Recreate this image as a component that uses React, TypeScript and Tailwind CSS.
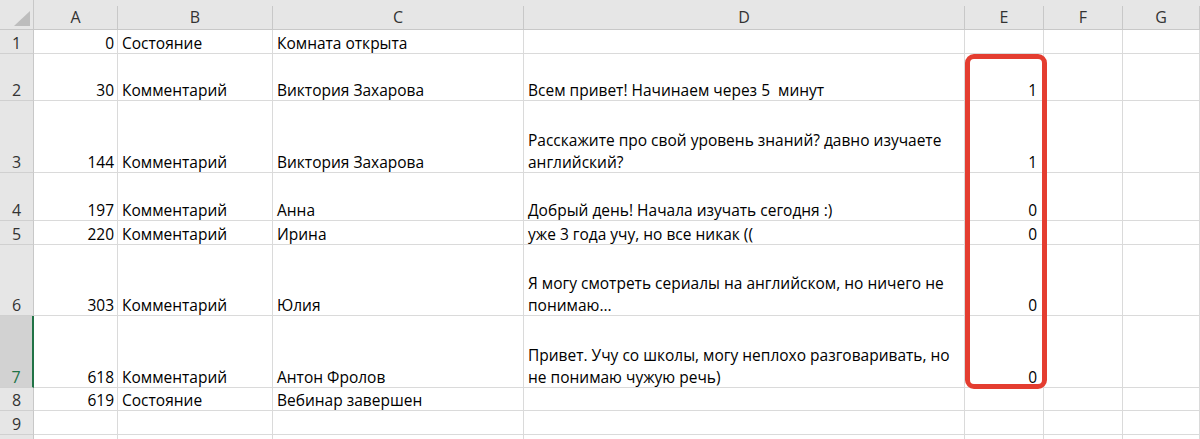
import React from 'react'

const cols = ['A', 'B', 'C', 'D', 'E', 'F', 'G']

type Row = { h: string; label?: string; n?: string; b?: string; c?: string; d?: string[]; e?: string; sel?: boolean }

const rows: Row[] = [
  { h: 'h-[24px]', label: '1', n: '0', b: 'Состояние', c: 'Комната открыта' },
  { h: 'h-[47px]', label: '2', n: '30', b: 'Комментарий', c: 'Виктория Захарова', d: ['Всем привет! Начинаем через 5  минут'], e: '1' },
  { h: 'h-[72px]', label: '3', n: '144', b: 'Комментарий', c: 'Виктория Захарова', d: ['Расскажите про свой уровень знаний? давно изучаете', 'английский?'], e: '1' },
  { h: 'h-[48px]', label: '4', n: '197', b: 'Комментарий', c: 'Анна', d: ['Добрый день! Начала изучать сегодня :)'], e: '0' },
  { h: 'h-[24px]', label: '5', n: '220', b: 'Комментарий', c: 'Ирина', d: ['уже 3 года учу, но все никак (('], e: '0' },
  { h: 'h-[71px]', label: '6', n: '303', b: 'Комментарий', c: 'Юлия', d: ['Я могу смотреть сериалы на английском, но ничего не', 'понимаю...'], e: '0' },
  { h: 'h-[72px]', label: '7', n: '618', b: 'Комментарий', c: 'Антон Фролов', d: ['Привет. Учу со школы, могу неплохо разговаривать, но', 'не понимаю чужую речь)'], e: '0', sel: true },
  { h: 'h-[23px]', label: '8', n: '619', b: 'Состояние', c: 'Вебинар завершен' },
  { h: 'h-[24px]', label: '9' },
  { h: 'h-[24px]' },
]

// cells are bottom-aligned, like Excel's default
const cell = 'border-r border-b border-[#dadada] flex flex-col justify-end gap-[2px] leading-[20px] whitespace-pre overflow-hidden'

export default function App() {
  return (
    <div className="relative w-[1200px] h-[439px] overflow-hidden bg-white text-[15.5px] text-black" style={{ fontFamily: '"Open Sans", sans-serif' }}>
      <div className="grid grid-cols-[34px_84px_155px_251px_441px_79px_79px_1fr]">
        {/* header */}
        <div className="h-[30px] bg-[#e6e6e6] border-b border-r border-[#c8c8c8] flex items-end justify-end pr-[3px] pb-[3px]">
          <svg width="16" height="15" viewBox="0 0 16 15">
            <polygon points="16,0 16,15 0,15" fill="#bdbdbd" />
          </svg>
        </div>
        {cols.map((c) => (
          <div key={c} className="h-[30px] bg-[#e6e6e6] border-b border-[#c8c8c8] flex items-end">
            <div className="h-[23px] w-full border-r border-[#c8c8c8] flex items-center justify-center text-[16px] text-[#333] pb-[1px]">{c}</div>
          </div>
        ))}
        {rows.map((r, i) => (
          <React.Fragment key={i}>
            <div className={`${r.h} ${r.sel ? 'bg-[#d2d2d2] text-[#217346] border-r-2 border-r-[#217346]' : 'bg-[#e6e6e6] text-[#333] border-r border-r-[#c8c8c8]'} border-b border-b-[#d0d0d0] flex items-end justify-center leading-[20px] text-[16px]`}>
              {r.label}
            </div>
            <div className={`${r.h} ${cell} items-end pr-[3px]`}><div>{r.n}</div></div>
            <div className={`${r.h} ${cell} pl-[4px]`}><div>{r.b}</div></div>
            <div className={`${r.h} ${cell} pl-[4px]`}><div>{r.c}</div></div>
            <div className={`${r.h} ${cell} pl-[4px]`}>
              {r.d?.map((l, j) => <div key={j}>{l}</div>)}
            </div>
            <div className={`${r.h} ${cell} items-end pr-[6px]`}><div>{r.e}</div></div>
            <div className={`${r.h} ${cell}`} />
            <div className={`${r.h} ${cell}`} />
          </React.Fragment>
        ))}
      </div>
      {/* red highlight drawn over column E */}
      <div className="absolute left-[965px] top-[54px] w-[82px] h-[335px] border-[5px] border-[#e43d30] rounded-[9px]" />
    </div>
  )
}
